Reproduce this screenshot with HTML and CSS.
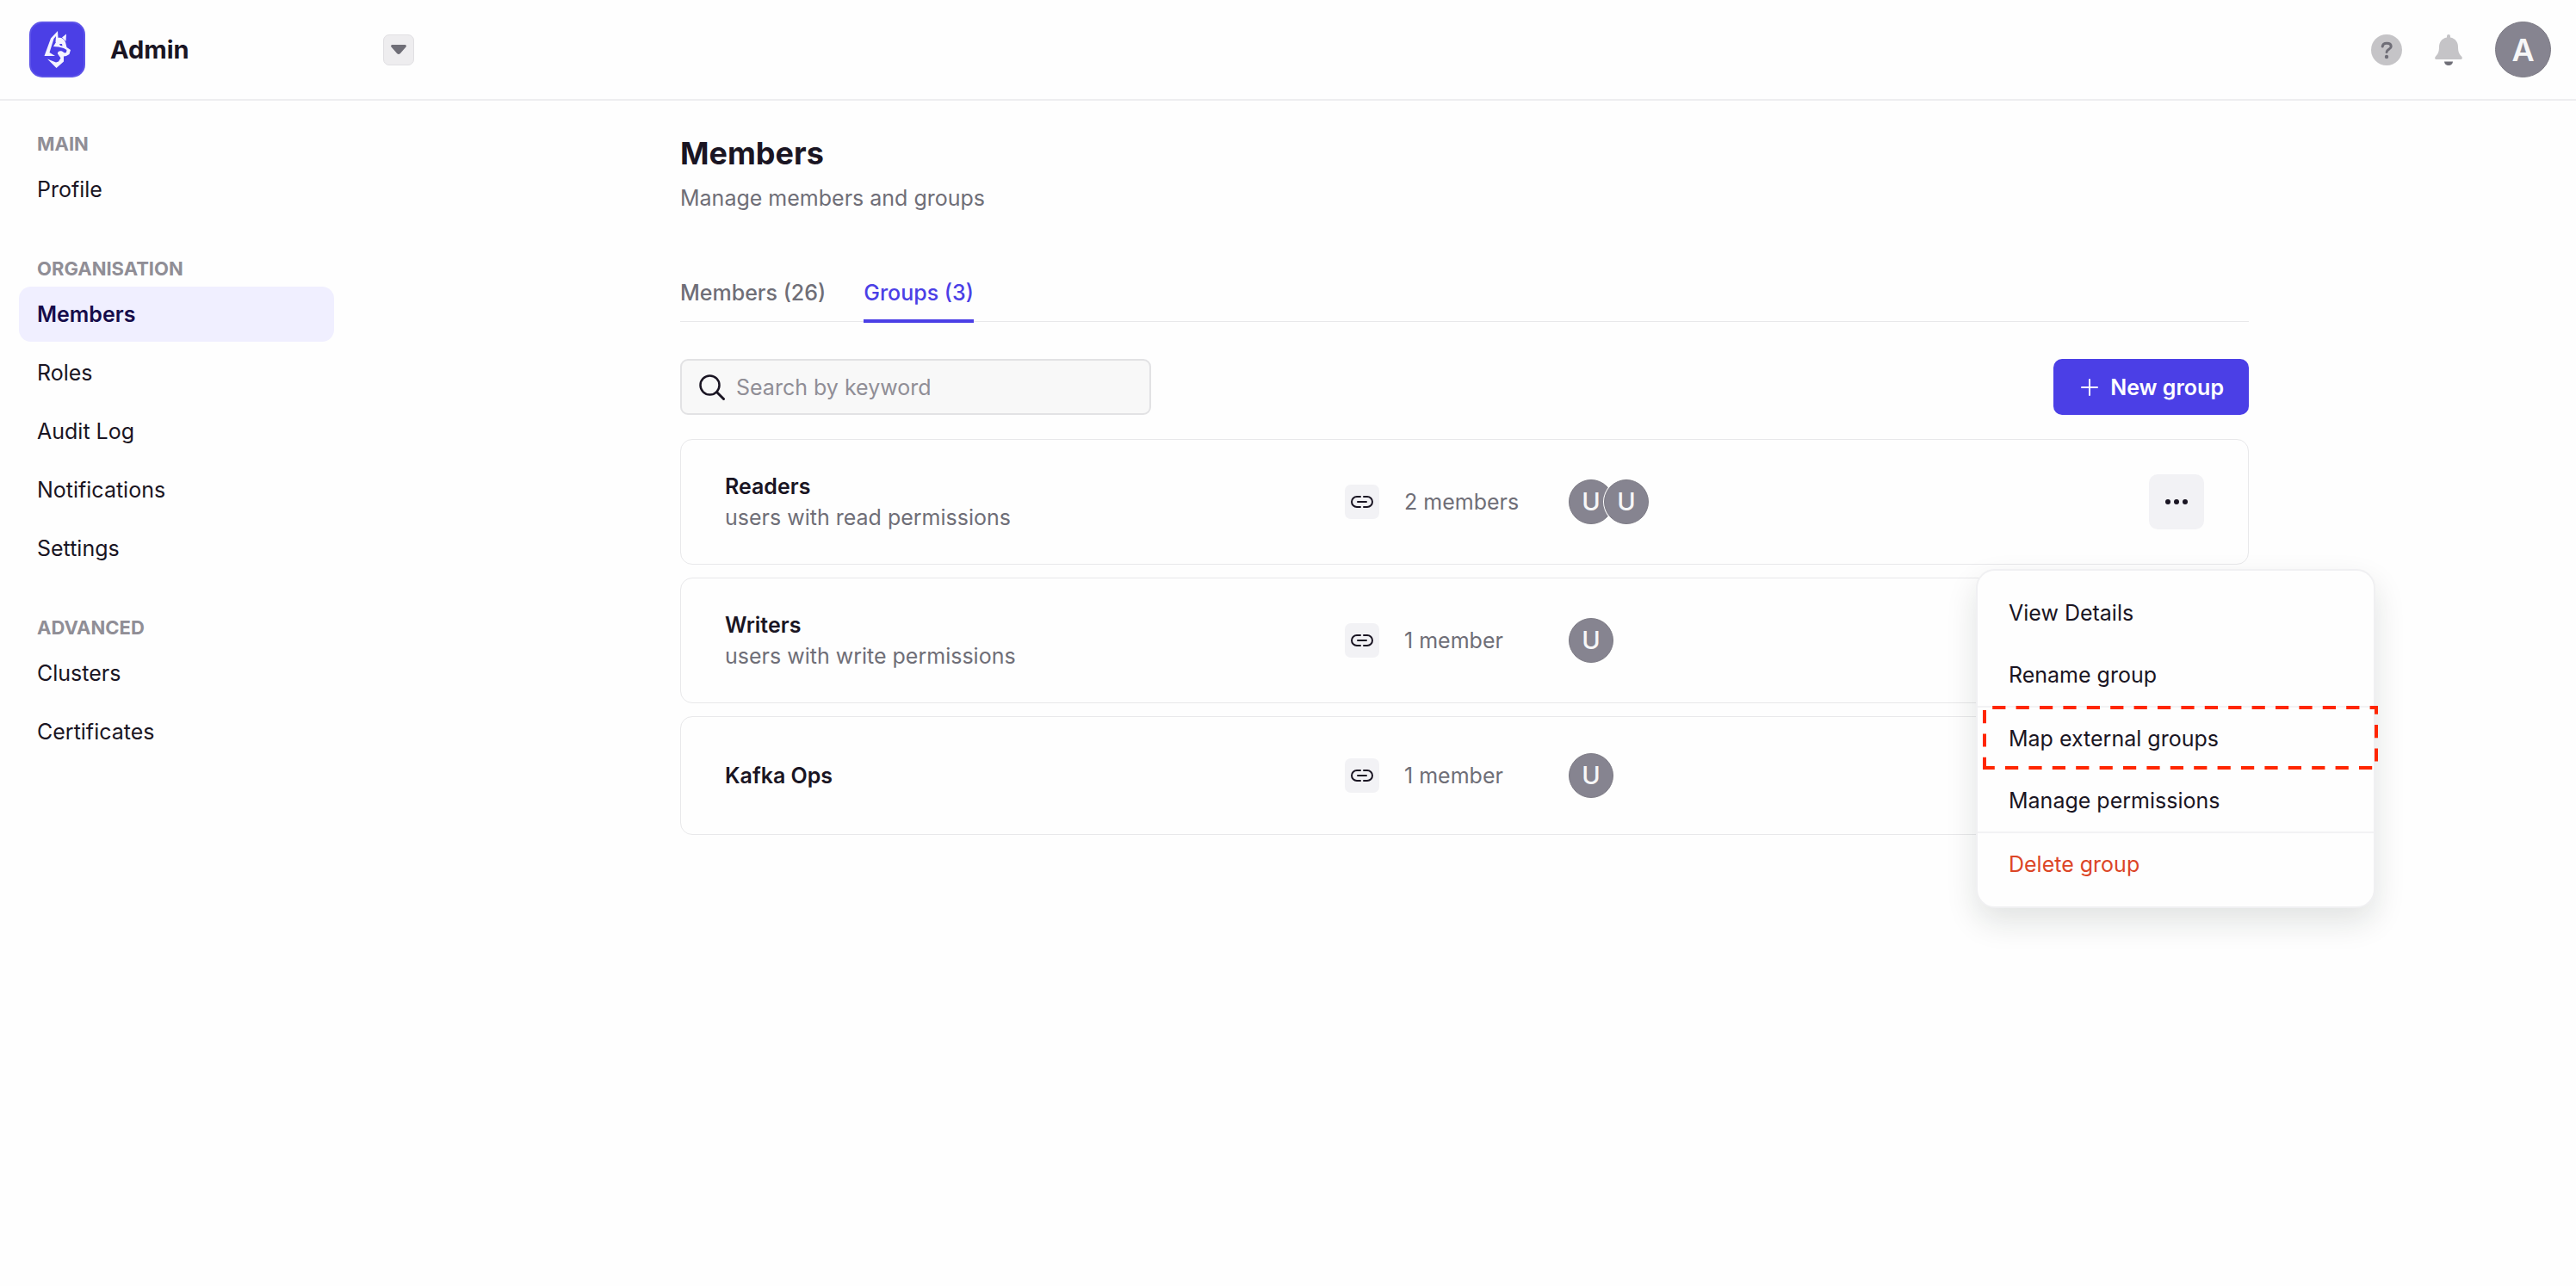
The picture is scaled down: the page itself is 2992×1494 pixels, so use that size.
FILE: index.html
```html
<!DOCTYPE html>
<html lang="en">
<head>
<meta charset="utf-8">
<meta name="viewport" content="width=device-width, initial-scale=1">
<title>Members - Admin</title>
<link rel="stylesheet" href="styles.css">
</head>
<body>
<svg class="sprite" aria-hidden="true">
  <symbol id="icon-link" viewBox="0 0 26 14">
    <path d="M11 1H7a6 6 0 0 0 0 12h4M15 1h4a6 6 0 0 1 0 12h-4M8 7h10" fill="none" stroke="currentColor" stroke-width="2" stroke-linecap="round"/>
  </symbol>
</svg>

<header class="topbar">
  <div class="brand">
    <svg class="logo" viewBox="0 0 65 65" role="img" aria-label="Logo">
      <rect width="65" height="65" rx="15" fill="#5c52e9"/>
      <rect x="2" y="2" width="61" height="61" rx="13" fill="#4b3fe6"/>
      <g fill="#f4f3ff">
        <path d="M33 11 25 19.500 17.500 40H30L23.500 36 28.500 20 31 17 30.500 24H33.500V19Z"/>
        <path d="M33 19C37 18 40.500 20 42 24L43.500 30 48 33 46.500 38 43 40 40 40.500V46.500L31.500 54 21 43.500 31 47.500 34 46.500 36.500 42.500 33 37.500C32.500 35 35 33.500 38 34.500L41 36.500 43 36 43.500 33 40 31 34 29.500 28 29 31 24Z"/>
        <path d="M43 14.500 38 18.500 42.500 23Z"/>
      </g>
      <path d="M35 26 38 26 38.500 28.500 36 28Z" fill="#4b3fe6"/>
    </svg>
    <span class="brand-name">Admin</span>
    <button class="switcher" type="button" aria-label="Switch workspace">
      <svg width="18" height="11" viewBox="0 0 18 11"><path d="M1.500 0h15a1.500 1.500 0 0 1 1 2.500L11 10a3 3 0 0 1-4 0L.5 2.500A1.500 1.500 0 0 1 1.500 0Z" fill="#6f6e77"/></svg>
    </button>
  </div>
  <div class="topbar-actions">
    <button class="icon-button" type="button" aria-label="Help">
      <svg width="36" height="36" viewBox="0 0 36 36"><circle cx="18" cy="18" r="18" fill="#c5c4c7"/><path d="M13.200 14c.3-2.500 2.200-3.800 5-3.800 2.900 0 5 1.400 5 3.700 0 3.600-4.900 3.100-5.100 6.600" fill="none" stroke="#6f6e77" stroke-width="3" stroke-linecap="round"/><circle cx="18" cy="26" r="2.200" fill="#6f6e77"/></svg>
    </button>
    <button class="icon-button" type="button" aria-label="Notifications">
      <svg width="36" height="36" viewBox="0 0 36 36"><path d="M18 0a2 2 0 0 1 2 2v1.500c6 1.300 9 5.500 9 11 0 6 1.500 8.500 4 11 1.800 2 .5 3.500-1 3.500H4c-1.500 0-2.800-1.500-1-3.500 2.500-2.500 4-5 4-11 0-5.500 3-9.700 9-11V2a2 2 0 0 1 2-2Z" fill="#c5c4c7"/><path d="M13 31.500h10a5 4.500 0 0 1-10 0Z" fill="#6f6e77"/></svg>
    </button>
    <button class="account" type="button" aria-label="Account">A</button>
  </div>
</header>

<div class="layout">
  <nav class="sidebar" aria-label="Administration">
    <section class="nav-section">
      <h2 class="nav-title">MAIN</h2>
      <a class="nav-item" href="#profile">Profile</a>
    </section>
    <section class="nav-section">
      <h2 class="nav-title">ORGANISATION</h2>
      <a class="nav-item nav-item-active" href="#members" aria-current="page">Members</a>
      <a class="nav-item" href="#roles">Roles</a>
      <a class="nav-item" href="#audit-log">Audit Log</a>
      <a class="nav-item" href="#notifications">Notifications</a>
      <a class="nav-item" href="#settings">Settings</a>
    </section>
    <section class="nav-section">
      <h2 class="nav-title">ADVANCED</h2>
      <a class="nav-item" href="#clusters">Clusters</a>
      <a class="nav-item" href="#certificates">Certificates</a>
    </section>
  </nav>

  <main class="main">
    <div class="content">
      <h1 class="page-title">Members</h1>
      <p class="page-subtitle">Manage members and groups</p>

      <nav class="tabs" aria-label="Members and groups">
        <a class="tab" href="#all-members">Members (26)</a>
        <a class="tab tab-active" href="#groups" aria-current="page">Groups (3)</a>
      </nav>

      <div class="toolbar">
        <label class="search">
          <svg width="30" height="30" viewBox="0 0 30 30" aria-hidden="true"><circle cx="12.500" cy="12.500" r="11" fill="none" stroke="#1a1523" stroke-width="2.500"/><path d="m20.500 20.500 8 8" stroke="#1a1523" stroke-width="3" stroke-linecap="round"/></svg>
          <input class="search-input" type="search" placeholder="Search by keyword" aria-label="Search by keyword">
        </label>
        <button class="primary" type="button">
          <svg width="20" height="20" viewBox="0 0 20 20" aria-hidden="true"><path d="M10 1v18M1 10h18" stroke="#fff" stroke-width="2" stroke-linecap="round"/></svg>
          New group
        </button>
      </div>

      <ul class="groups">
        <li class="group">
          <div>
            <h3 class="group-name">Readers</h3>
            <p class="group-note">users with read permissions</p>
          </div>
          <div class="group-members">
            <span class="link-badge"><svg width="26" height="14"><use href="#icon-link"/></svg></span>
            2 members
          </div>
          <div class="avatars"><span class="avatar">U</span><span class="avatar">U</span></div>
          <div class="group-actions">
            <button class="more" type="button" aria-label="Group actions" aria-expanded="true">
              <svg width="28" height="8" viewBox="0 0 28 8"><g fill="#1a1523"><circle cx="4" cy="4" r="3"/><circle cx="14" cy="4" r="3"/><circle cx="24" cy="4" r="3"/></g></svg>
            </button>
            <div class="menu" role="menu">
              <div class="menu-section">
                <button class="menu-item" type="button" role="menuitem">View Details</button>
                <button class="menu-item" type="button" role="menuitem">Rename group</button>
              </div>
              <div class="menu-section">
                <button class="menu-item" type="button" role="menuitem">Map external groups
                  <svg class="callout" width="459" height="74" viewBox="0 0 459 74" aria-hidden="true"><path d="M2 72V2H457V72Z" fill="none" stroke="#ff2600" stroke-width="4" stroke-dasharray="15.200 12.200" stroke-dashoffset="3"/></svg>
                </button>
                <button class="menu-item" type="button" role="menuitem">Manage permissions</button>
              </div>
              <div class="menu-section">
                <button class="menu-item menu-item-danger" type="button" role="menuitem">Delete group</button>
              </div>
            </div>
          </div>
        </li>
        <li class="group">
          <div>
            <h3 class="group-name">Writers</h3>
            <p class="group-note">users with write permissions</p>
          </div>
          <div class="group-members">
            <span class="link-badge"><svg width="26" height="14"><use href="#icon-link"/></svg></span>
            1 member
          </div>
          <div class="avatars"><span class="avatar">U</span></div>
        </li>
        <li class="group">
          <div>
            <h3 class="group-name">Kafka Ops</h3>
          </div>
          <div class="group-members">
            <span class="link-badge"><svg width="26" height="14"><use href="#icon-link"/></svg></span>
            1 member
          </div>
          <div class="avatars"><span class="avatar">U</span></div>
        </li>
      </ul>
    </div>
  </main>
</div>
</body>
</html>
```
FILE: styles.css
```css
:root {
  --ink: #1a1523;
  --muted: #6f6e77;
  --faint: #908e96;
  --line: #e8e8ea;
  --accent: #4b3fe6;
  --chip: #f2f2f5;
}

* { box-sizing: border-box; }

body {
  display: flex;
  flex-direction: column;
  min-height: 100vh;
  margin: 0;
  background: #fefefe;
  color: var(--ink);
  font: 400 25px/36px Inter, "Liberation Sans", sans-serif;
}

h1, h2, h3, p, ul { margin: 0; padding: 0; }
ul { list-style: none; }
a { color: inherit; text-decoration: none; }
button, input { font: inherit; color: inherit; }
button { border: 0; padding: 0; background: none; cursor: pointer; }
svg { display: block; flex: none; }
.sprite { position: absolute; width: 0; height: 0; }

/* Top bar */
.topbar {
  display: flex;
  align-items: center;
  justify-content: space-between;
  padding: 25px 29px 25px 34px;
  border-bottom: 2px solid #eeeef0;
}
.brand { display: flex; align-items: center; gap: 29px; width: 447px; }
.logo { width: 65px; height: 65px; }
.brand-name { flex: 1; font-size: 29px; font-weight: 700; }
.switcher {
  display: grid;
  place-items: center;
  width: 36px;
  height: 36px;
  border: 1px solid #e1e0e3;
  border-radius: 7px;
  background: #eeedef;
}
.topbar-actions { display: flex; align-items: center; gap: 36px; }
.account, .avatar {
  display: grid;
  place-items: center;
  border: 1px solid #7d7b85;
  border-radius: 50%;
  background: #868490;
  color: #f7f7f8;
  font-weight: 500;
}
.account { width: 65px; height: 65px; font-size: 36px; font-weight: 600; }

/* Sidebar */
.layout { display: flex; flex: 1; align-items: stretch; }
.sidebar {
  display: flex;
  flex: none;
  flex-direction: column;
  gap: 43px;
  width: 410px;
  padding: 33px 22px;
}
.nav-section { display: flex; flex-direction: column; gap: 4px; }
.nav-title {
  padding: 0 21px;
  color: var(--faint);
  font-size: 22px;
  font-weight: 700;
  line-height: 34px;
}
.nav-item { padding: 14px 21px; border-radius: 14px; }
.nav-item-active { background: #f0efff; color: #160c4a; font-weight: 600; }

/* Page */
.main { flex: 1; min-width: 0; padding: 37px 40px; }
.content { max-width: 1822px; margin: 0 auto; }
.page-title { font-size: 36px; font-weight: 700; line-height: 48px; }
.page-subtitle { margin-top: 10px; color: var(--muted); }
.tabs {
  display: flex;
  gap: 44px;
  margin-top: 74px;
  border-bottom: 1px solid var(--line);
}
.tab {
  margin-bottom: -2px;
  padding-bottom: 13px;
  border-bottom: 4px solid transparent;
  color: var(--muted);
  font-weight: 500;
}
.tab-active { border-color: var(--accent); color: var(--accent); }

.toolbar { display: flex; justify-content: space-between; margin: 43px 0 28px; }
.search {
  display: flex;
  align-items: center;
  gap: 13px;
  width: 547px;
  height: 65px;
  padding: 0 20px;
  border: 2px solid #e2e2e4;
  border-radius: 9px;
  background: #f8f8f8;
}
.search-input { flex: 1; min-width: 0; padding: 0; border: 0; outline: 0; background: none; }
.search-input::placeholder { color: var(--faint); opacity: 1; }
.primary {
  display: flex;
  align-items: center;
  gap: 14px;
  height: 65px;
  padding: 0 29px 0 32px;
  border-radius: 10px;
  background: var(--accent);
  color: #fff;
  font-weight: 600;
}

/* Group list */
.groups { display: flex; flex-direction: column; gap: 15px; }
.group {
  display: grid;
  grid-template-columns: 720fr 260fr 674fr 64px;
  align-items: center;
  min-height: 138px;
  padding: 36px 51px;
  border: 1px solid var(--line);
  border-radius: 14px;
}
.group-name { font-size: 25px; font-weight: 600; line-height: 36px; }
.group-note, .group-members { color: var(--muted); }
.group-members { display: flex; align-items: center; gap: 29px; }
.link-badge {
  display: grid;
  place-items: center;
  width: 40px;
  height: 40px;
  border-radius: 7px;
  background: var(--chip);
  color: var(--ink);
}
.avatars { display: flex; }
.avatar { width: 52px; height: 52px; font-size: 29px; }
.avatar + .avatar { margin-left: -11px; box-shadow: 0 0 0 1px #fff; }
.group-actions { position: relative; z-index: 1; }
.more {
  display: grid;
  place-items: center;
  width: 64px;
  height: 64px;
  border-radius: 10px;
  background: var(--chip);
}

/* Actions menu */
.menu {
  position: absolute;
  top: calc(100% + 46px);
  right: -199px;
  width: 464px;
  padding: 13px 0;
  border: 2px solid #f0f0f2;
  border-radius: 22px;
  background: #fefefe;
  box-shadow: 0 16px 36px rgba(20, 30, 25, 0.12);
}
.menu-section + .menu-section { border-top: 2px solid #f2f2f4; }
.menu-item {
  position: relative;
  display: block;
  width: 100%;
  padding: 18px 36px;
  text-align: left;
}
.menu-item-danger { color: #dc4526; }
.callout { position: absolute; top: -2px; left: 6px; }
```
